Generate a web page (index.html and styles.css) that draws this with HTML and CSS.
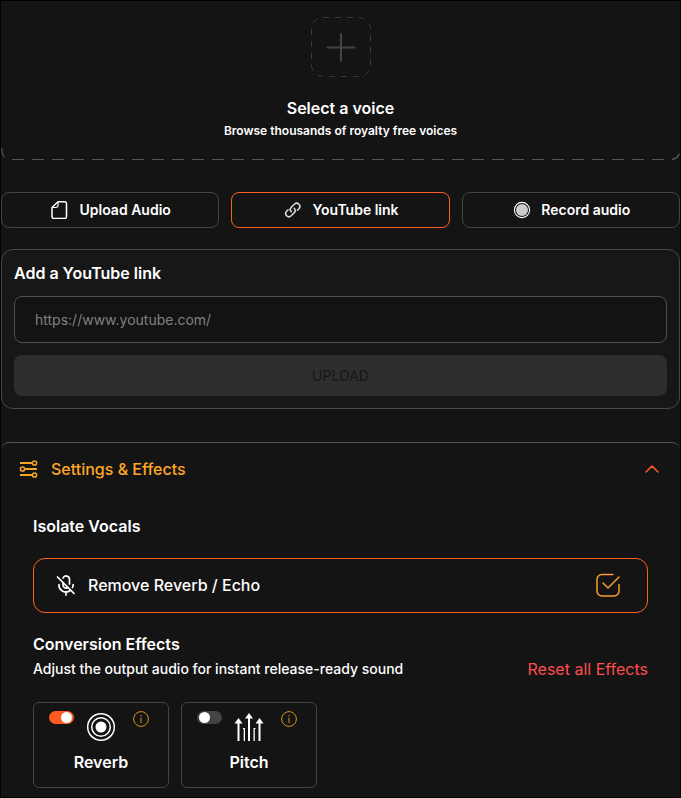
FILE: index.html
```html
<!DOCTYPE html>
<html lang="en">
<head>
    <meta charset="UTF-8">
    <meta name="viewport" content="width=device-width, initial-scale=1.0">
    <title>Voice Conversion</title>
    <link rel="stylesheet" href="styles.css">
</head>
<body>

    <main class="page">
        <button class="voice-picker" type="button">
            <svg class="voice-add" width="60" height="60" viewBox="0 0 60 60" fill="none" stroke="#3a3a3a">
                <rect x="0.5" y="0.5" width="59" height="59" rx="11.5" stroke-dasharray="6 6"/>
                <path d="M30 17v27M16.500 30.500h27" stroke="#444" stroke-width="2" stroke-linecap="round"/>
            </svg>
            <span class="voice-title">Select a voice</span>
            <span class="voice-text">Browse thousands of royalty free voices</span>
            <span class="voice-edge">
                <svg width="11" height="12" viewBox="0 0 11 12" fill="none" stroke="#484848" stroke-width="1.500"><path d="M0.500 0C0.500 4 1.500 7 3.500 9"/></svg>
                <span class="voice-dashes"></span>
                <svg width="8" height="12" viewBox="0 0 8 12" fill="none" stroke="#555" stroke-width="1.500"><path d="M0 11.300C3.500 11 6 9 7.500 5.500"/></svg>
            </span>
        </button>

        <div class="sources">
            <button class="source" type="button">
                <svg width="18" height="18" viewBox="0 0 18 18" fill="none" stroke="#fff" stroke-width="1.500" stroke-linejoin="round">
                    <path d="M7 0.750H13.500a2 2 0 0 1 2 2V15.500a2 2 0 0 1-2 2H3a2 2 0 0 1-2-2V6.500z"/>
                    <path d="M7 1V4.500a2 2 0 0 1-2 2H1.200" stroke-width="1.200"/>
                </svg>
                Upload Audio
            </button>
            <button class="source active" type="button">
                <svg width="18" height="18" viewBox="0 0 18 18" fill="none" stroke="#ddd" stroke-width="1.500" stroke-linecap="round">
                    <path d="M7.300 10.700A3.200 3.200 0 0 1 7.300 6.200L10.600 3A3.200 3.200 0 0 1 15.100 7.500L13.400 9.200"/>
                    <path d="M10.200 7.300A3.200 3.200 0 0 1 10.200 11.800L6.900 15A3.200 3.200 0 0 1 2.400 10.500L4.100 8.800"/>
                </svg>
                YouTube link
            </button>
            <button class="source" type="button">
                <svg width="18" height="18" viewBox="0 0 18 18">
                    <circle cx="9" cy="9" r="7.600" fill="none" stroke="#fff" stroke-width="1.100"/>
                    <circle cx="9" cy="9" r="6" fill="#ccc"/>
                </svg>
                Record audio
            </button>
        </div>

        <form class="link-card">
            <label class="link-title" for="link">Add a YouTube link</label>
            <input class="link-input" id="link" type="url" placeholder="https://www.youtube.com/">
            <button class="upload-btn" type="button" disabled>UPLOAD</button>
        </form>

        <section class="settings">
            <button class="settings-header" type="button" aria-expanded="true">
                <svg width="20" height="20" viewBox="0 0 20 20" fill="none" stroke="#f5a623" stroke-width="1.500">
                    <path d="M1 4h12M6 10h12M1 16h12" stroke-width="1.800"/>
                    <circle cx="15.500" cy="4" r="2.100"/>
                    <circle cx="3.500" cy="10" r="2.100"/>
                    <circle cx="15.500" cy="16" r="2.100"/>
                </svg>
                <span>Settings &amp; Effects</span>
                <svg class="chevron" width="14" height="8" viewBox="0 0 14 8" fill="none" stroke="#ff5a1f" stroke-width="1.500" stroke-linecap="round" stroke-linejoin="round"><path d="M1 7l6-6 6 6"/></svg>
            </button>

            <div class="settings-body">
                <h2>Isolate Vocals</h2>
                <label class="option">
                    <svg width="24" height="24" viewBox="0 0 24 24" fill="none" stroke="#fff" stroke-width="1.700" stroke-linecap="round">
                        <path d="M3.500 4L20 20.500"/>
                        <path d="M9 5a3.400 3.400 0 0 1 6.500 1.300V11M9 9.500V12a3.200 3.200 0 0 0 5 2.600"/>
                        <path d="M5 11.500a7 7 0 0 0 11.300 6M19.200 11.500a7 7 0 0 1-.7 3M12 18.500V22"/>
                    </svg>
                    <span>Remove Reverb / Echo</span>
                    <span class="check">
                        <input type="checkbox" checked>
                        <svg width="24" height="24" viewBox="0 0 24 24" fill="none" stroke="#ff9a2e" stroke-width="1.500" stroke-linecap="round" stroke-linejoin="round">
                            <path d="M17 1.500H6a5 5 0 0 0-5 5V18a5 5 0 0 0 5 5h12a5 5 0 0 0 5-5V11.500"/>
                            <path d="M7 10l5 5L23 4"/>
                        </svg>
                    </span>
                </label>

                <div class="effects-header">
                    <div>
                        <h2>Conversion Effects</h2>
                        <p>Adjust the output audio for instant release-ready sound</p>
                    </div>
                    <button class="reset-btn" type="button">Reset all Effects</button>
                </div>

                <div class="effects">
                    <div class="effect">
                        <input class="toggle" id="reverb" type="checkbox" checked>
                        <svg width="32" height="32" viewBox="0 0 32 32" fill="none" stroke="#fff" stroke-width="1.500">
                            <circle cx="16" cy="16" r="13.300"/>
                            <circle cx="16" cy="16" r="9.300"/>
                            <circle cx="16" cy="16" r="5.500" fill="#fff" stroke="none"/>
                        </svg>
                        <button class="info" type="button" aria-label="About reverb">
                            <svg width="16" height="16" viewBox="0 0 16 16" fill="none" stroke="#d98e1c"><circle cx="8" cy="8" r="7.400"/><path d="M8 6.500V12M8 4v1.300"/></svg>
                        </button>
                        <label for="reverb">Reverb</label>
                    </div>
                    <div class="effect">
                        <input class="toggle" id="pitch" type="checkbox">
                        <svg width="32" height="32" viewBox="0 0 32 32" fill="#fff">
                            <path d="M4.500 30V12.500H1.500L5.500 7l4 5.500H6.500V30z"/>
                            <path d="M15 30V7.500H12L16 2l4 5.500H17V30z"/>
                            <path d="M25.500 30V12.500H22.500L26.500 7l4 5.500H27.500V30z"/>
                            <path d="M10 17h2v13h-1.300V18H10zM20.500 17h2v1h-.7v12h-1.300z"/>
                        </svg>
                        <button class="info" type="button" aria-label="About pitch">
                            <svg width="16" height="16" viewBox="0 0 16 16" fill="none" stroke="#d98e1c"><circle cx="8" cy="8" r="7.400"/><path d="M8 6.500V12M8 4v1.300"/></svg>
                        </button>
                        <label for="pitch">Pitch</label>
                    </div>
                </div>
            </div>
        </section>
    </main>

</body>
</html>
```

FILE: styles.css
```css
* {
    box-sizing: border-box;
}

body {
    margin: 0;
    font-family: Inter, "Liberation Sans", sans-serif;
    font-size: 16px;
    line-height: 20px;
    color: #fff;
    background-color: #141414;
}

button,
input {
    font: inherit;
    color: inherit;
}

button {
    padding: 0;
    border: 0;
    background: none;
    cursor: pointer;
}

svg {
    display: block;
    flex: none;
}

h2,
p {
    margin: 0;
}

h2 {
    font-size: 16px;
    font-weight: 600;
}

.page {
    min-height: 100vh;
    border: 1px solid #000;
}

/* Voice picker */
.voice-picker {
    display: flex;
    flex-direction: column;
    align-items: center;
    width: 100%;
    padding-top: 16px;
}

.voice-title {
    margin-top: 21px;
    font-weight: 600;
}

.voice-text {
    margin-top: 4px;
    font-size: 12px;
    line-height: 18px;
    font-weight: 600;
}

.voice-edge {
    display: flex;
    align-items: flex-end;
    width: 100%;
    margin-top: 8px;
}

.voice-dashes {
    flex: 1;
    height: 1px;
    background: repeating-linear-gradient(90deg, #555 0 12px, transparent 12px 20px);
}

/* Source tabs */
.sources {
    display: grid;
    grid-template-columns: repeat(3, 1fr);
    gap: 12px;
    margin-top: 32px;
}

.source {
    display: flex;
    justify-content: center;
    align-items: center;
    gap: 10px;
    height: 36px;
    padding-left: 2px;
    border: 1px solid #444;
    border-radius: 8px;
    font-size: 14px;
    font-weight: 600;
}

.source.active {
    border-color: #ff5f1f;
}

/* YouTube link form */
.link-card {
    display: flex;
    flex-direction: column;
    gap: 12px;
    margin-top: 21px;
    padding: 12px;
    border: 1px solid #484848;
    border-radius: 12px;
    background-color: #171717;
}

.link-title {
    line-height: 22px;
    font-weight: 600;
}

.link-input {
    height: 47px;
    padding: 0 20px;
    border: 1px solid #505050;
    border-radius: 8px;
    background-color: #131313;
    font-size: 14px;
}

.link-input::placeholder {
    color: #808080;
}

.upload-btn {
    height: 41px;
    border-radius: 8px;
    background-color: #2e2e2e;
    color: #171717;
    font-size: 14px;
}

/* Settings */
.settings {
    margin-top: 33px;
    border-top: 1px solid #505050;
    border-radius: 8px;
}

.settings-header {
    display: flex;
    align-items: center;
    gap: 12px;
    width: 100%;
    padding: 16px 21px 17px 18px;
    color: #ffa726;
    font-weight: 500;
}

.chevron {
    margin-left: auto;
}

.settings-body {
    padding: 20px 32px 8px;
}

.option {
    display: flex;
    align-items: center;
    gap: 10px;
    height: 55px;
    margin-top: 22px;
    padding: 0 27px 2px 20px;
    border: 1px solid #ff5f1f;
    border-radius: 12px;
    font-weight: 500;
    cursor: pointer;
}

.check {
    display: grid;
    margin-left: auto;
}

.check > * {
    grid-area: 1 / 1;
}

.check input {
    appearance: none;
    width: 24px;
    height: 24px;
    margin: 0;
}

.effects-header {
    display: flex;
    justify-content: space-between;
    align-items: flex-end;
    margin-top: 21px;
}

.effects-header p {
    margin-top: 5px;
    font-size: 14px;
    font-weight: 500;
}

.reset-btn {
    color: #ff4d4d;
}

.effects {
    display: flex;
    gap: 12px;
    margin-top: 23px;
}

.effect {
    display: grid;
    grid-template-columns: 1fr auto 1fr;
    align-items: start;
    align-content: start;
    width: 136px;
    height: 86px;
    padding: 8px 15px;
    border: 1px solid #444;
    border-radius: 6px;
}

.effect label {
    grid-column: 1 / -1;
    margin-top: 9px;
    text-align: center;
    font-weight: 600;
}

.toggle {
    appearance: none;
    display: flex;
    width: 25px;
    height: 13px;
    margin: 0;
    padding: 1px 2px;
    border-radius: 7px;
    background-color: #444;
    cursor: pointer;
}

.toggle::before {
    content: "";
    width: 11px;
    height: 11px;
    border-radius: 50%;
    background-color: #fff;
}

.toggle:checked {
    justify-content: flex-end;
    background-color: #ff5a1f;
}

.info {
    display: flex;
    justify-content: center;
    justify-self: end;
    width: 24px;
}
```
